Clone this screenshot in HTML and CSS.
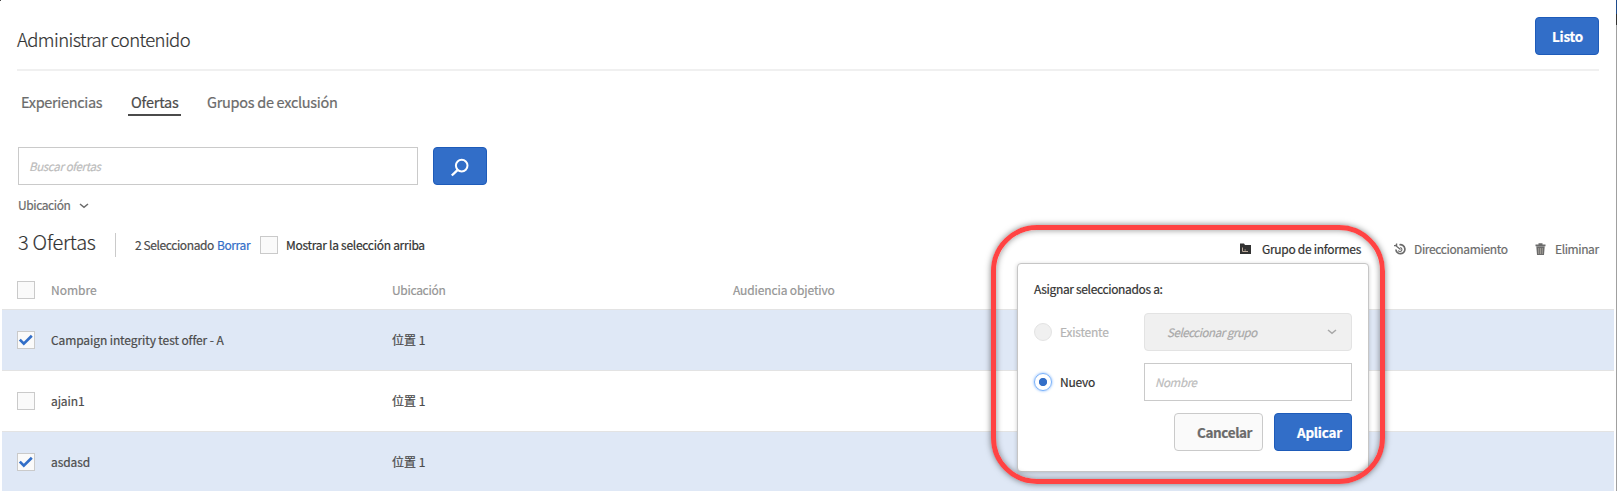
FILE: index.html
```html
<!DOCTYPE html>
<html lang="es">
<head>
<meta charset="utf-8">
<title>Administrar contenido</title>
<link rel="stylesheet" href="styles.css">
</head>
<body>
<main class="dialog">
  <header class="header">
    <h1 class="title">Administrar contenido</h1>
    <button class="btn primary done">Listo</button>
  </header>
  <nav class="tabs">
    <a class="tab tab-exp">Experiencias</a>
    <a class="tab active">Ofertas</a>
    <a class="tab tab-groups">Grupos de exclusión</a>
  </nav>
  <div class="search">
    <div class="field search-field"><span class="placeholder">Buscar ofertas</span></div>
    <button class="btn primary search-btn">
      <svg width="20" height="20" viewBox="0 0 20 20" fill="none" stroke="#fff" stroke-width="2"><circle cx="11.7" cy="7.6" r="5.8"/><path d="M7.7 11.8 1.8 17.5" stroke-width="2.4"/></svg>
    </button>
  </div>
  <div class="filter"><span>Ubicación</span><svg width="10" height="6" viewBox="0 0 10 6" fill="none" stroke="#6b6b6b" stroke-width="1.5"><path d="M1 1l4 3.3L9 1"/></svg></div>
  <div class="summary">
    <h2 class="count">3 Ofertas</h2>
    <div class="selected">2 Seleccionado</div>
    <a class="clear">Borrar</a>
    <span class="check"></span>
    <span class="show-top">Mostrar la selección arriba</span>
    <div class="toolbar">
      <a class="tool current"><svg width="11" height="11" viewBox="0 0 11 11"><path d="M0 .5h4l1 1.5h6v9H0z" fill="#323232"/><path d="M2.5 4.5v4H8" fill="none" stroke="#bba99a"/><path d="M4.5 7h1.3" stroke="#bba99a"/></svg><span class="t-report">Grupo de informes</span></a>
      <a class="tool"><svg width="12" height="12" viewBox="0 0 12 12" fill="none" stroke="#6b6b6b"><path d="M5.5 1.8A4.5 4.5 0 1 1 1.9 6.5" stroke-width="1.7"/><path d="M6.2 4.5a2 2 0 1 1-2 3" stroke-width="1.1"/><path d="M1 2l5.5 4.5M0 2.7h2.6V.4" stroke-width="1.3"/></svg><span class="t-target">Direccionamiento</span></a>
      <a class="tool"><svg width="11" height="12" viewBox="0 0 11 12" fill="#6b6b6b"><path d="M.5 1.5h3V.3h4v1.2h3v1.7H.5zM1.3 3.6h8.4L9 12H2z"/><path d="M3.7 5v6M5.5 5v6M7.3 5v6" stroke="#c3bdb2" stroke-width=".6"/></svg><span class="t-delete">Eliminar</span></a>
    </div>
  </div>
  <section class="table">
    <div class="row head"><span class="check"></span><span>Nombre</span><span class="h-loc">Ubicación</span><span class="h-aud">Audiencia objetivo</span></div>
    <div class="row on"><span class="check"><svg width="16" height="16" viewBox="0 0 16 16"><path d="M1.8 7.6l4 4.1 8-8" fill="none" stroke="#326ec8" stroke-width="2.7"/></svg></span><span class="name">Campaign integrity test offer - A</span><span>位置 1</span></div>
    <div class="row"><span class="check"></span><span class="name">ajain1</span><span>位置 1</span></div>
    <div class="row on"><span class="check"><svg width="16" height="16" viewBox="0 0 16 16"><path d="M1.8 7.6l4 4.1 8-8" fill="none" stroke="#326ec8" stroke-width="2.7"/></svg></span><span class="name">asdasd</span><span>位置 1</span></div>
  </section>
</main>
<div class="window-edge"></div>
<div class="corner"></div>
<div class="popover">
  <div class="pop-title">Asignar seleccionados a:</div>
  <div class="option disabled"><span class="radio"></span><span class="opt-label">Existente</span>
    <div class="select"><span class="placeholder">Seleccionar grupo</span><svg width="10" height="6" viewBox="0 0 10 6" fill="none" stroke="#a8a8a8" stroke-width="1.5"><path d="M1 1l4 3.3L9 1"/></svg></div></div>
  <div class="option"><span class="radio chosen"></span><span class="opt-label">Nuevo</span>
    <div class="field"><span class="placeholder">Nombre</span></div></div>
  <div class="actions"><button class="btn cancel">Cancelar</button><button class="btn primary apply">Aplicar</button></div>
</div>
<div class="callout"></div>
</body>
</html>
```
FILE: styles.css
```css
* { box-sizing: border-box; }
body {
  margin: 0;
  height: 491px;
  overflow: hidden;
  position: relative;
  background: #fff;
  color: #4b4b4b;
  font: 12px/20px "Noto Sans CJK SC", "Noto Sans", sans-serif;
  white-space: nowrap;
  -webkit-text-stroke: .2px;
}
h1, h2 { margin: 0; }
svg { flex: none; display: block; }
.dialog { display: flex; flex-direction: column; }

.header {
  display: flex;
  justify-content: space-between;
  align-items: flex-start;
  height: 71px;
  margin: 0 18px 0 17px;
  padding-top: 17px;
  border-bottom: 2px solid #f0f0f0;
}
.title { font-size: 18.5px; font-weight: 300; line-height: 44px; letter-spacing: -.6px; color: #323232; }
.btn {
  display: flex;
  align-items: center;
  height: 38px;
  padding: 0;
  border: 1px solid #cacaca;
  border-radius: 4px;
  background: #fafafa;
  color: #6b6b6b;
  font: 700 13.5px/36px "Noto Sans CJK SC", sans-serif;
}
.primary { background: #326ec8; border-color: #1e5bb9; color: #fff; }
.done { width: 64px; padding-left: 16px; letter-spacing: -.25px; }

.tabs { display: flex; gap: 18px; margin: 20px 0 0 18px; }
.tab {
  padding: 0 4px 2px 3px;
  border-bottom: 2px solid transparent;
  font-size: 14.5px;
  line-height: 21px;
  color: #6b6b6b;
}
.tab-exp { width: 92px; letter-spacing: -.32px; }
.active { width: 53px; letter-spacing: -.2px; color: #4b4b4b; border-color: #4b4b4b; }
.tab-groups { margin-left: 5px; letter-spacing: -.29px; }

.search { display: flex; gap: 15px; margin: 31px 0 0 18px; }
.field {
  display: flex;
  align-items: center;
  width: 208px;
  height: 38px;
  padding-left: 10px;
  border: 1px solid #cacaca;
  background: #fff;
}
.search-field { width: 400px; }
.placeholder { font-style: italic; font-size: 11.5px; letter-spacing: -.35px; color: #bcbcbc; }
.search-btn { width: 54px; padding: 3px 0 0 16px; }

.filter { display: flex; align-items: center; gap: 8px; margin: 10px 0 0 18px; letter-spacing: -.4px; color: #6b6b6b; }
.filter svg { margin-top: 2px; }

.summary { display: flex; align-items: center; height: 26px; margin: 17px 18px 0 18px; }
.count {
  width: 98px;
  height: 24px;
  border-right: 1px solid #cacaca;
  font-size: 20px;
  font-weight: 300;
  line-height: 18px;
  letter-spacing: -.25px;
  color: #323232;
}
.selected { width: 82px; margin-left: 19px; letter-spacing: -.4px; }
.clear { width: 43px; letter-spacing: -.4px; color: #326ec8; }
.show-top { margin-left: 8px; letter-spacing: -.28px; color: #323232; }
.check { flex: none; width: 18px; height: 18px; border: 1px solid #cacaca; background: #fafafa; }
.toolbar { display: flex; margin: 7px 0 0 auto; gap: 30px; }
.tool { display: flex; align-items: center; color: #6b6b6b; }
.current { color: #323232; margin-right: 3px; }
.t-report { width: 99px; margin-left: 11px; letter-spacing: -.3px; }
.t-target { width: 94px; margin-left: 8px; letter-spacing: -.36px; }
.t-delete { width: 44px; margin-left: 9px; letter-spacing: -.4px; }
.tool:last-child { margin-left: -3px; }

.table { margin: 13px 3px 0 2px; }
.row {
  display: grid;
  grid-template-columns: 34px 341px 341px 1fr;
  align-items: center;
  height: 61px;
  padding-left: 15px;
  border-bottom: 1px solid #e3e3e3;
}
.head { height: 39px; color: #959595; }
.h-loc { letter-spacing: -.3px; }
.h-aud { letter-spacing: -.12px; }
.on { background: #dfe8f6; }
.name { letter-spacing: -.1px; }

.window-edge { position: absolute; right: 0; top: 0; width: 1px; height: 491px; background: linear-gradient(#1e4b8c 14px, #323232 14px 25px, #a0a0a0 25px); }
.corner { position: absolute; left: 0; top: 0; width: 1px; height: 1px; background: #4b4b4b; }

.popover {
  position: absolute;
  left: 1017px;
  top: 263px;
  width: 352px;
  height: 209px;
  padding: 15px 16px 0 16px;
  border: 1px solid #c6c6c6;
  border-radius: 4px;
  background: #fff;
  box-shadow: 0 1px 4px rgba(0,0,0,.2);
}
.pop-title { color: #323232; letter-spacing: -.34px; }
.option { display: flex; align-items: center; margin-top: 12px; color: #323232; }
.disabled { margin-top: 14px; color: #b4b4b4; }
.radio { width: 18px; height: 18px; border: 1px solid #e3e3e3; border-radius: 50%; background: #f0f0f0; }
.chosen { border-color: #78b0fa; background: radial-gradient(circle, #326ec8 3.7px, #fff 4.5px); box-shadow: 0 0 3px #78b0fa; }
.opt-label { width: 84px; margin-left: 8px; letter-spacing: -.22px; }
.select {
  display: flex;
  align-items: center;
  justify-content: space-between;
  width: 208px;
  height: 38px;
  padding: 0 14px 0 22px;
  border: 1px solid #e3e3e3;
  border-radius: 4px;
  background: #f0f0f0;
}
.select .placeholder { color: #a8a8a8; letter-spacing: -.42px; }
.actions { display: flex; justify-content: flex-end; gap: 11px; margin-top: 12px; }
.cancel { width: 89px; padding-left: 22px; letter-spacing: -.38px; }
.apply { width: 78px; padding-left: 22px; letter-spacing: -.25px; }

.callout {
  position: absolute;
  left: 991px;
  top: 225px;
  width: 394px;
  height: 259px;
  border: 5px solid #ff4343;
  border-radius: 46px;
  box-shadow: 0 0 6px rgba(0,0,0,.5), inset 0 0 6px rgba(0,0,0,.45);
}
```
